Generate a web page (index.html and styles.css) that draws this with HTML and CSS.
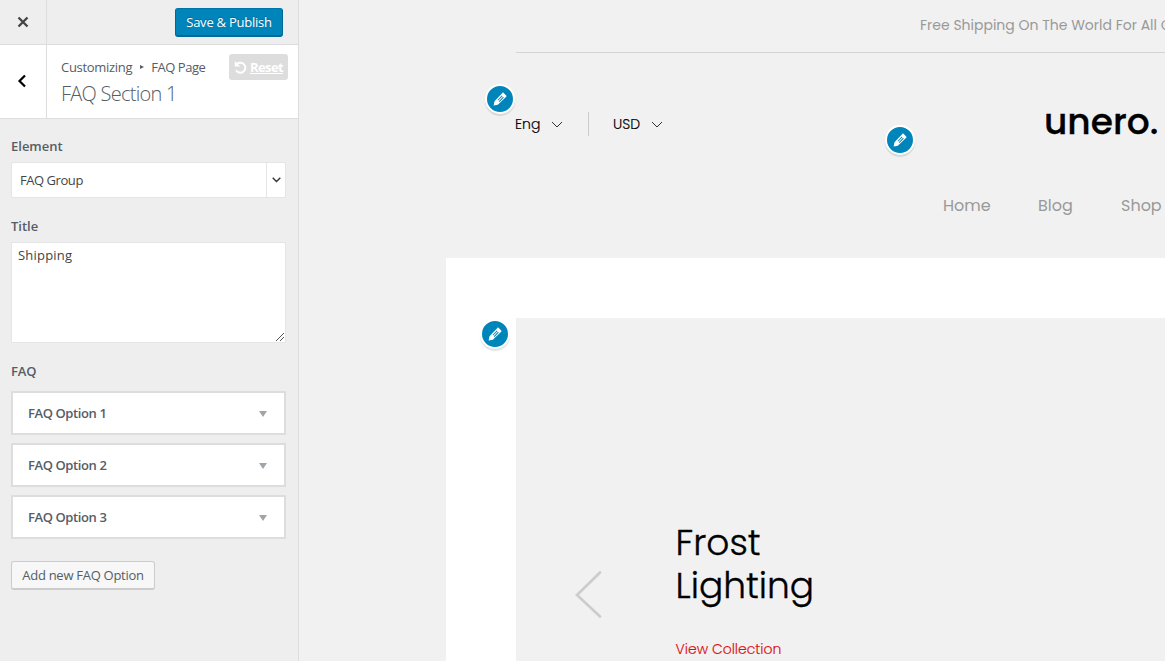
FILE: index.html
```html
<!DOCTYPE html>
<html lang="en">
<head>
<meta charset="utf-8">
<title>Customize: FAQ Page</title>
<link rel="stylesheet" href="styles.css">
</head>
<body>
<svg class="defs" width="0" height="0">
  <symbol id="pencil" viewBox="0 0 20 20"><path fill="#fff" fill-rule="evenodd" d="M13.9 3.1l3 2.9c.5.5.4 1 0 1.4L7.6 16.3 2.9 17.300l1-4.700 8.700-9.300c.4-.5.9-.6 1.300-.2zM7.300 11.100l.7.700 4.700-4.900-.7-.7zM8.700 12.500l.7.700 4.800-4.800-.8-.800z"/></symbol>
  <symbol id="chevron" viewBox="0 0 12 7"><path d="M1 1l5 5 5-5" fill="none" stroke="#333" stroke-width="1"/></symbol>
</svg>
<div class="app">
  <aside class="sidebar">
    <header class="topbar">
      <button class="close" aria-label="Close"><svg width="12" height="12" viewBox="0 0 12 12"><path d="M1.500 1.500l9 9M10.500 1.500l-9 9" stroke="#444" stroke-width="2.300"/></svg></button>
      <button class="publish">Save &amp; Publish</button>
    </header>
    <div class="section-head">
      <button class="back" aria-label="Back"><svg width="10" height="14" viewBox="0 0 10 14"><path d="M8 1.500L2.500 7 8 12.500" fill="none" stroke="#000" stroke-width="2.200"/></svg></button>
      <div class="heading">
        <div class="crumbs"><span>Customizing</span><i class="crumb-arrow"></i><span class="crumb-page">FAQ Page</span></div>
        <h1>FAQ Section 1</h1>
      </div>
      <a class="reset"><svg width="13" height="13" viewBox="0 0 13 13"><path d="M3.200 2.800A5 5 0 1 1 2 9.200" fill="none" stroke="#fff" stroke-width="2"/><path d="M.8 0v5.500h5.500z" fill="#fff"/></svg><b>Reset</b></a>
    </div>
    <form class="controls">
      <label class="label">Element</label>
      <div class="select"><span>FAQ Group</span><i class="select-btn"><svg width="9" height="6" viewBox="0 0 9 6"><path d="M.7.7l3.800 3.800L8.300.7" fill="none" stroke="#333" stroke-width="1.400"/></svg></i></div>
      <label class="label label-title">Title</label>
      <div class="textarea"><span>Shipping</span><svg class="grip" width="8" height="8" viewBox="0 0 8 8"><path d="M0 8l8-8M4 8l4-4" stroke="#444" stroke-width=".9"/></svg></div>
      <label class="label label-faq">FAQ</label>
      <div class="options">
        <div class="option"><span>FAQ Option 1</span><i></i></div>
        <div class="option"><span>FAQ Option 2</span><i></i></div>
        <div class="option"><span>FAQ Option 3</span><i></i></div>
      </div>
      <button type="button" class="add">Add new FAQ Option</button>
    </form>
  </aside>
  <main class="preview">
    <div class="promo"><span>Free Shipping On The World For All Orders</span></div>
    <div class="brand-row">
      <div class="switch">Eng<svg class="chev" width="12" height="7"><use href="#chevron"/></svg></div>
      <div class="switch currency">USD<svg class="chev" width="12" height="7"><use href="#chevron"/></svg></div>
      <div class="logo">unero.</div>
    </div>
    <nav class="nav"><a class="home">Home</a><a class="blog">Blog</a><a>Shop</a></nav>
    <div class="page">
      <section class="hero">
        <svg class="prev" width="28" height="48" viewBox="0 0 28 48"><path d="M25 2.500L2 25 25 46.500" fill="none" stroke="#ccc" stroke-width="2.600" stroke-linecap="round"/></svg>
        <div class="slide">
          <h2>Frost<br>Lighting</h2>
          <a class="view">View Collection</a>
        </div>
      </section>
    </div>
    <button class="edit edit-lang" aria-label="Edit"><svg width="18" height="18"><use href="#pencil"/></svg></button>
    <button class="edit edit-logo" aria-label="Edit"><svg width="18" height="18"><use href="#pencil"/></svg></button>
    <button class="edit edit-hero" aria-label="Edit"><svg width="18" height="18"><use href="#pencil"/></svg></button>
  </main>
</div>
</body>
</html>
```
FILE: styles.css
```css
* { box-sizing: border-box; }
body { margin: 0; overflow: hidden; }
button { font: inherit; color: inherit; padding: 0; border: 0; background: none; display: block; }
svg { display: block; }
.defs { position: absolute; }
.app { display: flex; width: 1165px; height: 661px; overflow: hidden; }

.sidebar { flex: none; width: 299px; background: #eee; border-right: 1px solid #ddd; font: 13px/18px "Open Sans", "Noto Sans", sans-serif; color: #555d66; white-space: nowrap; }
.topbar { height: 45px; display: flex; justify-content: space-between; align-items: center; border-bottom: 1px solid #ddd; padding-right: 15px; }
.close { width: 47px; height: 44px; display: grid; place-items: center; border-right: 1px solid #ddd; }
.publish { width: 108px; height: 29px; margin-top: 1px; background: #0085ba; border: 1px solid #006799; border-top-color: #0073aa; border-bottom-width: 2px; border-radius: 3px; color: #fff; letter-spacing: -.24px; text-shadow: 0 -1px 1px #006799; }
.section-head { display: flex; height: 74px; background: #fff; border-bottom: 1px solid #ddd; }
.back { width: 47px; padding: 0 2px 2px 0; display: grid; place-items: center; border-right: 1px solid #ddd; }
.heading { padding: 13px 0 0 14px; width: 182px; }
.crumbs { display: flex; align-items: center; letter-spacing: -.3px; }
.crumb-arrow { margin: 0 7px 0 8px; border-left: 4px solid #555d66; border-top: 2.500px solid transparent; border-bottom: 2.500px solid transparent; }
.crumb-page { letter-spacing: -.45px; }
h1 { margin: 5px 0 0; font-size: 20px; line-height: 26px; font-weight: 300; letter-spacing: -.75px; }
.reset { width: 59px; height: 26px; margin-top: 9px; background: #ddd; border-radius: 3px; color: #fff; display: flex; align-items: center; justify-content: center; gap: 3px; text-decoration: underline; letter-spacing: -.6px; }

.controls { padding: 17px 12px 0 11px; }
.label { display: block; font-weight: 600; line-height: 20px; }
.select { height: 36px; margin-top: 6px; padding-left: 8px; display: flex; align-items: center; justify-content: space-between; background: #fff; border: 1px solid #e5e5e5; border-radius: 2px; color: #444; letter-spacing: -.45px; }
.select-btn { width: 19px; height: 34px; border-left: 1px solid #e5e5e5; display: grid; place-items: center; }
.label-title { margin-top: 18px; }
.textarea { height: 101px; margin-top: 6px; padding: 3px 1px 1px 6px; display: flex; justify-content: space-between; background: #fff; border: 1px solid #e5e5e5; color: #444; letter-spacing: .2px; }
.grip { align-self: flex-end; }
.label-faq { margin-top: 18px; letter-spacing: -.1px; }
.options { display: grid; gap: 8px; margin-top: 10px; }
.option { height: 44px; padding: 0 17px 0 15px; display: flex; align-items: center; justify-content: space-between; background: #fff; border: 2px solid #ddd; font-weight: 600; letter-spacing: -.4px; }
.option i { margin-top: 1px; border-top: 6px solid #a0a5aa; border-left: 4px solid transparent; border-right: 4px solid transparent; }
.add { width: 144px; height: 29px; margin-top: 22px; background: #f7f7f7; border: 1px solid #ccc; border-bottom-width: 2px; border-radius: 3px; letter-spacing: -.28px; }

.preview { position: relative; flex: none; width: 866px; background: #f1f1f1; font-family: Poppins, Inter, sans-serif; color: #222; white-space: nowrap; overflow: hidden; }
.promo { height: 53px; margin-left: 217px; padding: 15px 0 0 404px; border-bottom: 1px solid #d4d4d4; font-size: 14px; line-height: 21px; color: #999; }
.brand-row { display: flex; align-items: center; height: 72px; margin: 35px 0 0 216px; }
.switch { display: flex; align-items: center; height: 24px; font-size: 14px; font-weight: 300; color: #000; -webkit-text-stroke: .15px; }
.switch:first-child { width: 74px; border-right: 1px solid #ccc; }
.chev { margin-left: 11px; }
.currency { margin-left: 24px; width: 52px; }
.logo { margin: -4px 0 0 379px; font-size: 36px; font-weight: 500; line-height: 50px; color: #000; -webkit-text-stroke: .3px; }
.nav { display: flex; padding-left: 644px; margin-top: 34px; font-size: 16px; line-height: 24px; color: #999; }
.nav .home { width: 95px; }
.nav .blog { width: 83px; }
.page { height: 403px; margin: 40px 0 0 147px; padding: 60px 0 0 70px; background: #fff; }
.hero { display: flex; height: 343px; padding-left: 59px; background: #f1f1f1; }
.prev { margin-top: 252px; }
.slide { padding: 203px 0 0 72.500px; }
h2 { margin: 0; font-size: 36px; line-height: 43px; font-weight: 300; color: #000; -webkit-text-stroke: .35px; }
.view { display: block; margin-top: 32px; font-size: 14px; font-weight: 300; line-height: 21px; color: #d11; -webkit-text-stroke: .15px; }
.edit { position: absolute; width: 30px; height: 30px; border: 2px solid #fff; border-radius: 50%; background: #0085ba; box-shadow: 0 2px 1px rgba(46,68,83,.15); display: grid; place-items: center; }
.edit-lang { left: 186px; top: 84px; }
.edit-logo { left: 586px; top: 125px; }
.edit-hero { left: 181px; top: 319px; }
```
